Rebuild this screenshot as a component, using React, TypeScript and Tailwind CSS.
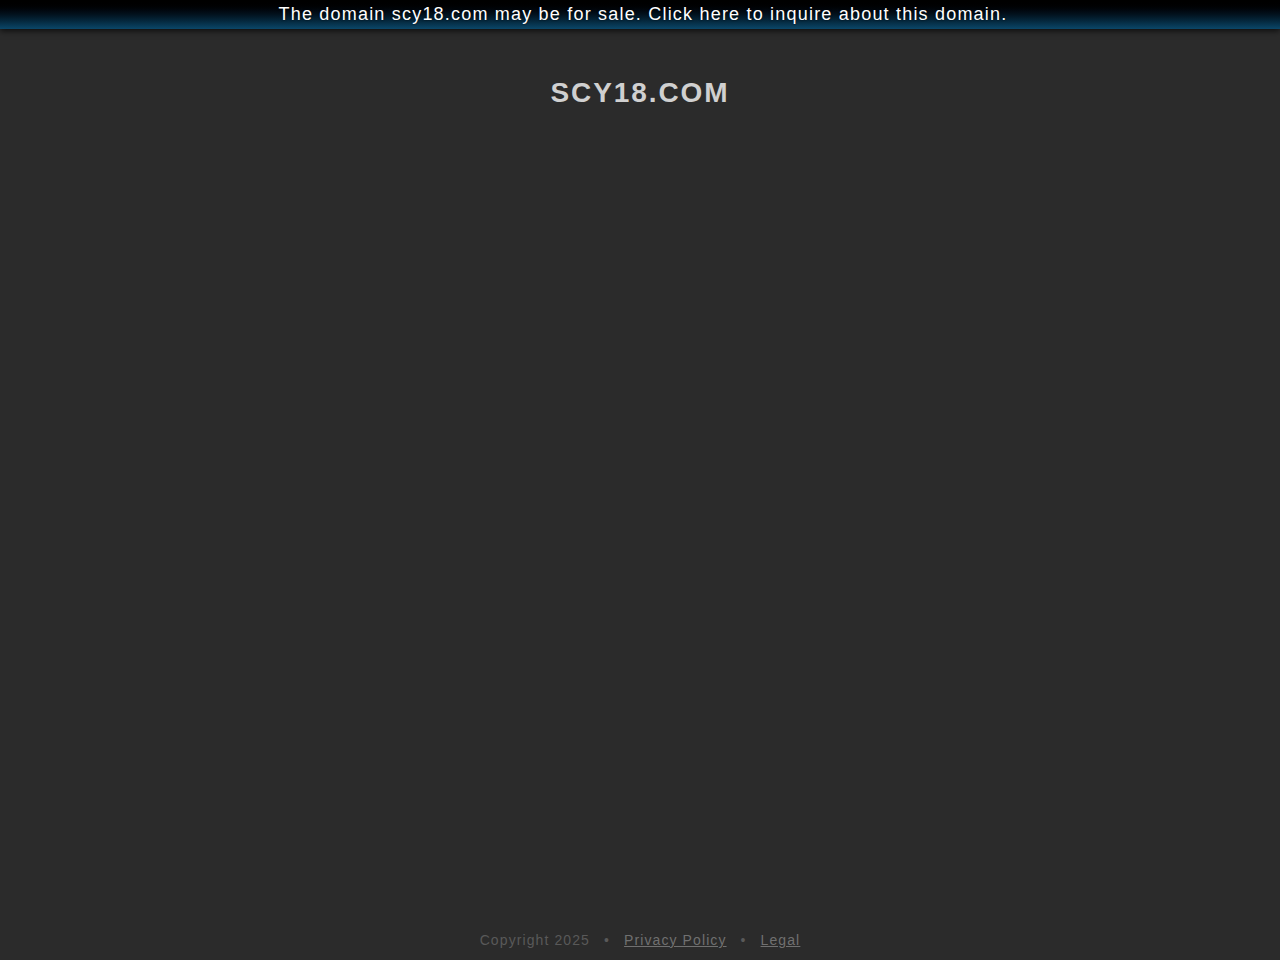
import React from 'react'

const App = () => {
    return (
        <div className="min-h-screen h-[960px] bg-[#2b2b2b] flex flex-col font-['Liberation_Sans',Arial,sans-serif]">
            <div className="h-[29px] w-full bg-gradient-to-b from-black via-[#02121e] to-[#0b4769] shadow-[0_2px_6px_rgba(0,0,0,0.7)] flex items-center justify-center pl-[6px] pb-[2px]">
                <a className="text-white text-[18px] tracking-[1.2px] leading-none [text-shadow:0_0_2px_rgba(0,0,0,0.8)] cursor-pointer">
                    The domain scy18.com may be for sale. Click here to inquire about this domain.
                </a>
            </div>

            <div className="flex justify-center pt-[48px]">
                <h1 className="text-[28px] font-bold tracking-[1.9px] text-[#d0d0d0] leading-[32px]">SCY18.COM</h1>
            </div>

            <div className="flex-1" />

            <div className="flex justify-center items-center pb-[9px] text-[14px] tracking-[1.1px] text-[#595959]">
                <span>Copyright 2025</span>
                <span className="mx-[14px]">•</span>
                <a className="underline cursor-pointer text-[#707070]">Privacy Policy</a>
                <span className="mx-[14px]">•</span>
                <a className="underline cursor-pointer text-[#707070]">Legal</a>
            </div>
        </div>
    )
}

export default App
